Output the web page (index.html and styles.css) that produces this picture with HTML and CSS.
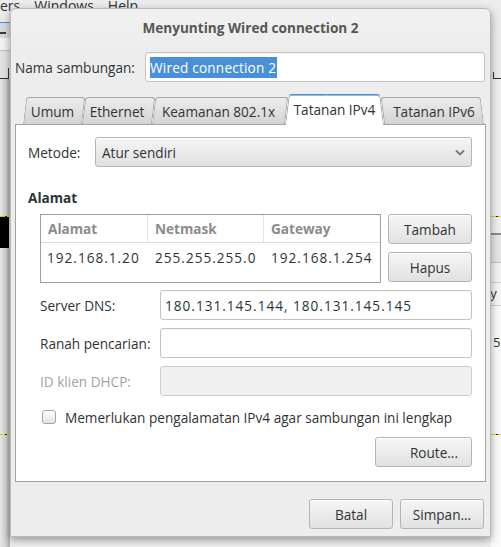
FILE: index.html
```html
<!DOCTYPE html>
<html lang="id">
<head>
<meta charset="utf-8">
<title>Menyunting Wired connection 2</title>
<link rel="stylesheet" href="styles.css">
</head>
<body>
<div class="backdrop">
  <div class="menubar">
    <div class="menu-items"><span>ers</span><span>Windows</span><span>Help</span></div>
  </div>
  <div class="under">
    <div class="lcol">
      <div class="l-blue"></div>
      <div class="l-tool"></div>
      <div class="l-dash"></div>
      <div class="l-tool2"></div>
      <div class="l-light"></div>
      <div class="l-sep"></div>
      <div class="l-grey"></div>
      <div class="l-corner"></div>
      <div class="l-col h137"></div>
      <div class="ydash"></div>
      <div class="l-black"></div>
      <div class="l-col h186"></div>
      <div class="ydash"></div>
      <div class="l-col fill"></div>
    </div>
    <div class="mid"></div>
    <div class="rcol">
      <div class="r-top"></div>
      <div class="r-corner"></div>
      <div class="r-pane h137"></div>
      <div class="ydash"></div>
      <div class="r-pane h16"></div>
      <div class="r-thick"></div>
      <div class="r-grey"></div>
      <div class="r-thin"></div>
      <div class="r-light"></div>
      <div class="r-head"><span>ry</span></div>
      <div class="r-white h28"></div>
      <div class="r-text"><span>59</span></div>
      <div class="r-white h83"></div>
      <div class="ydash"></div>
      <div class="r-white fill"></div>
    </div>
  </div>
</div>

<div class="dialog">
  <div class="titlebar">Menyunting Wired connection 2</div>
  <div class="name-row">
    <span class="name-label">Nama sambungan:</span>
    <div class="entry name-entry"><span class="sel">Wired connection 2</span></div>
  </div>
  <div class="notebook">
    <div class="tabs">
      <div class="tab w-umum">Umum</div>
      <div class="tab w-eth">Ethernet</div>
      <div class="tab w-sec">Keamanan 802.1x</div>
      <div class="tab active w-v4">Tatanan IPv4</div>
      <div class="tab last w-v6">Tatanan IPv6</div>
    </div>
    <div class="panel">
      <div class="method-row">
        <span class="method-label">Metode:</span>
        <div class="combo">
          <span>Atur sendiri</span>
          <svg class="chev" width="10" height="7" viewBox="0 0 10 7"><polyline points="1,1.5 5,5.5 9,1.5" fill="none" stroke="#7b7b7b" stroke-width="1.8"/></svg>
        </div>
      </div>
      <div class="section-title">Alamat</div>
      <div class="addr-block">
        <div class="addr-table">
          <div class="tr head">
            <div class="c c1">Alamat</div>
            <div class="c c2">Netmask</div>
            <div class="c c3">Gateway</div>
          </div>
          <div class="tr data">
            <div class="c c1 num">192.168.1.20</div>
            <div class="c c2 num">255.255.255.0</div>
            <div class="c c3 num">192.168.1.254</div>
          </div>
        </div>
        <div class="addr-btns">
          <button class="btn">Tambah</button>
          <button class="btn">Hapus</button>
        </div>
      </div>
      <div class="form-grid">
        <span class="flabel">Server DNS:</span>
        <div class="entry"><span class="num">180.131.145.144, 180.131.145.145</span></div>
        <span class="flabel">Ranah pencarian:</span>
        <div class="entry"></div>
        <span class="flabel dim">ID klien DHCP:</span>
        <div class="entry disabled"></div>
      </div>
      <div class="check-row">
        <span class="checkbox"></span>
        <span>Memerlukan pengalamatan IPv4 agar sambungan ini lengkap</span>
      </div>
      <div class="route-row">
        <button class="btn route">Route...</button>
      </div>
    </div>
  </div>
  <div class="actions">
    <button class="btn">Batal</button>
    <button class="btn">Simpan...</button>
  </div>
</div>
</body>
</html>
```

FILE: styles.css
```css
* { box-sizing: border-box; }
html, body { margin: 0; padding: 0; }
body {
  width: 501px;
  height: 547px;
  overflow: hidden;
  position: relative;
  background: #e8e8e8;
  font-family: "Open Sans", "Noto Sans", "DejaVu Sans", sans-serif;
  font-size: 13.6px;
  color: #2e3436;
}

/* ---------- underlying window ---------- */
.backdrop { height: 547px; display: flex; flex-direction: column; }
.menubar { height: 22px; background: #ececec; overflow: hidden; flex: none; }
.menu-items {
  display: flex; gap: 14px; margin-top: -4px; margin-left: 0;
  line-height: 20px; font-size: 14px; color: #2e3436;
}
.under { flex: 1; display: flex; }
.mid { flex: 1; background: #f0f0f0; }
.lcol, .rcol { width: 10px; display: flex; flex-direction: column; flex: none; }
.l-blue { height: 1px; background: #4a90d9; }
.l-tool { height: 9px; background: #d9d9d9; }
.l-dash { height: 2px; background: linear-gradient(to right, #3a3a3a 6px, #d9d9d9 6px); }
.l-tool2 { height: 4px; background: #d9d9d9; }
.l-light { height: 12px; background: #f3f3f3; }
.l-sep { height: 1px; background: #c0c0c0; }
.l-grey { height: 17px; background: #e3e3e3; }
.l-corner { height: 11px; width: 9px; background: #e3e3e3; border-right: 1px solid #333; border-bottom: 1px solid #333; }
.l-col { background: linear-gradient(to right, #e6e6e6 0, #d0d0d0 60%, #b6b6b6 85%, #8e8e8e 90%, #e8e8e8 100%); }
.l-black { height: 31px; background: linear-gradient(to right, #000 90%, #d8d8d8 90%); }
.h137 { height: 137px; }
.h186 { height: 186px; }
.h16 { height: 16px; }
.h28 { height: 28px; }
.h83 { height: 83px; }
.fill { flex: 1; }
.ydash { height: 1px; background: repeating-linear-gradient(to right, #e0d300 0 5px, #222 5px 7px); }
.r-top { height: 50px; background: #ececec; }
.r-corner { height: 7px; margin-left: 2px; border-left: 1px solid #333; border-bottom: 1px solid #333; background: #ececec; }
.r-pane { background: #efefef; }
.r-thick { height: 2px; background: #8c8c8c; }
.r-grey { height: 27px; background: #e6e6e6; }
.r-thin { height: 1px; background: #c6c6c6; }
.r-light { height: 19px; background: #f3f3f3; }
.r-head {
  height: 24px; background: #f6f6f6; border-top: 1px solid #cfcfcf; border-bottom: 1px solid #cfcfcf;
  overflow: hidden; line-height: 20px; font-size: 13px; color: #2e3436;
}
.r-head span { display: block; margin-left: -6px; }
.r-white { background: #fafafa; }
.r-text { height: 17px; background: #fafafa; overflow: hidden; font-size: 13px; line-height: 17px; }
.r-text span { display: block; margin-left: 2px; }

/* ---------- dialog ---------- */
.dialog {
  position: absolute;
  left: 10px; top: 8px;
  width: 481px; height: 529px;
  background: #ededed;
  border: 1px solid #b9b9b9;
  border-radius: 6px 6px 0 0;
  box-shadow: 0 3px 9px rgba(0, 0, 0, .38);
  display: flex; flex-direction: column;
}
.titlebar {
  height: 38px; line-height: 38px; text-align: center;
  font-weight: 700; color: #555753; font-size: 13.6px;
  border-radius: 6px 6px 0 0;
  background: linear-gradient(#f1f1f1, #ededed);
  flex: none;
}
.name-row { display: flex; align-items: center; margin: 5px 5px 0 4px; height: 30px; flex: none; }
.name-label { width: 130px; flex: none; }
.entry {
  height: 30px; background: #fff;
  border: 1px solid #c3c3c3; border-radius: 3px;
  display: flex; align-items: center; padding-left: 4px;
  box-shadow: inset 0 1px 1px rgba(0, 0, 0, .05);
  white-space: nowrap; overflow: hidden;
}
.entry.disabled { background: #f0f0f0; border-color: #cdcdcd; box-shadow: none; }
.name-entry { flex: 1; }
.sel { background: #4a90d9; color: #fff; line-height: 21px; padding-right: 1px; letter-spacing: .2px; }

.notebook { margin: 12px 4px 0 4px; flex: none; }
.tabs { height: 30px; display: flex; align-items: flex-end; padding-left: 8px; }
.tab {
  position: relative; z-index: 1;
  height: 27px; flex: none;
  display: flex; align-items: center; justify-content: center;
  padding-top: 1px;
  color: #2e3436; white-space: nowrap;
}
.tab::before {
  content: ""; position: absolute; top: 0; bottom: 0; left: 0; right: 0; z-index: -1;
  background: linear-gradient(#ececec, #d4d4d4);
  border: 1px solid #a6a6a6; border-bottom: none;
  border-radius: 3px 3px 0 0;
  transform: skewX(-7deg); transform-origin: bottom;
}
.tab.last::before { transform: skewX(7deg); }
.tab.active { height: 31px; margin-bottom: -1px; z-index: 3; padding-top: 0; }
.tab.active::before {
  right: 45%; background: #fff;
  border-top: 1px solid #4a90d9; border-right: none;
  border-radius: 3px 0 0 0;
  box-shadow: inset 0 1px 0 #8fb8e6;
}
.tab.active::after {
  content: ""; position: absolute; top: 0; bottom: 0; left: 45%; right: 0; z-index: -1;
  background: #fff;
  border: 1px solid #a6a6a6; border-top-color: #4a90d9; border-left: none; border-bottom: none;
  border-radius: 0 3px 0 0;
  box-shadow: inset 0 1px 0 #8fb8e6;
  transform: skewX(7deg); transform-origin: bottom;
}
.w-umum { width: 59px; }
.w-eth { width: 70px; }
.w-sec { width: 133px; }
.w-v4 { width: 99px; }
.w-v6 { width: 100px; }

.panel {
  height: 358px; background: #fff;
  border: 1px solid #a3a3a3;
  padding: 0 13px 0 12px;
  display: flex; flex-direction: column;
}
.method-row { display: flex; align-items: center; height: 30px; margin-top: 12px; }
.method-label { width: 67px; flex: none; }
.combo {
  flex: 1; height: 30px;
  display: flex; align-items: center; justify-content: space-between;
  padding: 0 6px 0 6px;
  border: 1px solid #b5b5b5; border-radius: 3px;
  background: linear-gradient(#f5f5f5, #e0e0e0);
  box-shadow: inset 0 1px 0 #fff;
}
.chev { display: block; }
.section-title { font-weight: 700; line-height: 18px; margin-top: 22px; }

.addr-block { display: flex; gap: 7px; margin-top: 7px; padding-left: 12px; }
.addr-table { width: 341px; height: 69px; border: 1px solid #9e9e9e; background: #fff; }
.tr { display: flex; }
.tr.head { height: 28px; border-bottom: 1px solid #dcdcdc; }
.tr.data { height: 28px; }
.c { padding-left: 7px; display: flex; align-items: center; white-space: nowrap; }
.head .c { font-weight: 700; color: #8b8b8b; }
.head .c1, .head .c2 { border-right: 1px solid #e2e2e2; }
.c1 { width: 107px; }
.c2 { width: 116px; }
.c3 { width: 116px; }
.data .c1 { padding-left: 6px; }
.num { letter-spacing: 1px; }

.addr-btns { display: flex; flex-direction: column; gap: 8px; }
.btn {
  font: inherit; color: #2e3436;
  width: 84px; height: 30px;
  border: 1px solid #b5b5b5; border-radius: 3px;
  background: linear-gradient(#f6f6f6, #e1e1e1);
  box-shadow: inset 0 1px 0 #fff;
  padding: 0;
  display: flex; align-items: center; justify-content: center;
}

.form-grid {
  display: grid; grid-template-columns: 120px 312px;
  row-gap: 8px; margin-top: 7px; padding-left: 12px;
  align-items: center;
}
.flabel { white-space: nowrap; }
.flabel.dim { color: #a2a2a2; }

.check-row { display: flex; align-items: center; gap: 9px; height: 18px; margin-top: 12px; padding-left: 14px; white-space: nowrap; }
.checkbox {
  width: 14px; height: 14px; flex: none;
  border: 1px solid #a5a5a5; border-radius: 3px;
  background: linear-gradient(#ffffff, #e3e3e3);
}
.route-row { display: flex; justify-content: flex-end; margin-top: 11px; }
.btn.route { width: 97px; justify-content: flex-end; padding-right: 13px; }

.actions { display: flex; justify-content: flex-end; gap: 7px; margin-top: 17px; padding-right: 6px; }
```
